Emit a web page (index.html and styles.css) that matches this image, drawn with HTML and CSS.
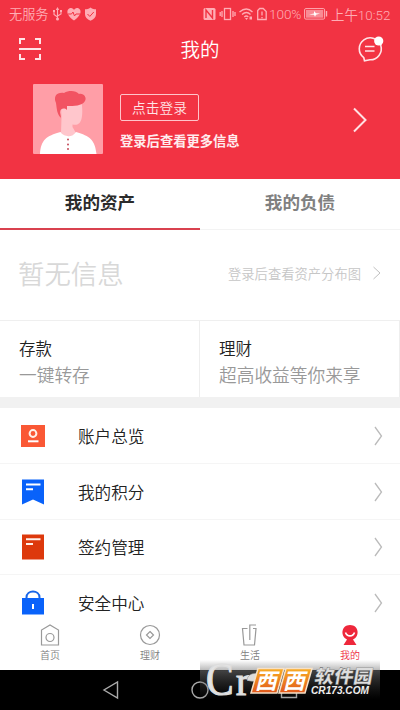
FILE: index.html
```html
<!DOCTYPE html>
<html lang="zh-CN">
<head>
<meta charset="utf-8">
<title>我的</title>
<link rel="stylesheet" href="styles.css">
</head>
<body>
<div class="phone">
  <header class="hero">
    <div class="status">
      <span class="carrier">无服务</span>
      <svg class="status-left" width="50" height="16" viewBox="0 0 50 16">
        <g fill="none" stroke="#ffadb5" stroke-width="1.1"><path d="M7.500 2v11M4 5v3.500l3.500 2.500M11 5v3l-3.500 2"/></g>
        <g fill="#ffadb5"><path d="M5.800 4l1.700-3 1.700 3zM3 4h2v2H3zM10 4h2v2h-2z"/><circle cx="7.500" cy="13" r="1.500"/>
        <path d="M24 14.500C14 7.500 17.500 2 21 2c1.500 0 2.500 1 3 2 .5-1 1.500-2 3-2 3.500 0 7 5.500-3 12.500z"/>
        <path d="M40.500 1.500c2 1.500 3.500 1.800 5.500 1.800v5c0 3-2 5-5.500 6.500C37 13.300 35 11.300 35 8.300v-5c2 0 3.500-.3 5.500-1.800z"/></g>
        <path d="M18 8h3.500l1.500-2 1.500 4 1.500-2h4M37.500 8l2.300 2.400 4-4.400" fill="none" stroke="#f23343"/>
      </svg>
      <svg class="status-right" width="66" height="16" viewBox="0 0 66 16">
        <rect x="2.500" y="2" width="12" height="12" rx="1.500" fill="#ffadb5"/>
        <path d="M5 12V4l6.500 8V4" fill="none" stroke="#f23343" stroke-width="1.400"/>
        <g fill="none" stroke="#ffadb5" stroke-width="1.300"><rect x="23.500" y="2.500" width="6" height="11"/><path d="M21 5v6M19.200 6v4M32 5v6M34 6v4"/>
        <path d="M38.500 6q7-6 13 0M41 8.500q4.500-4 8.500 0M43.300 11q2-2 4 0"/><path d="M56.700 4.500v9h8.500v-8l-3-3h-3.500zM61 5.500v4M61 11v1.300"/></g>
        <path d="M44 12l1.500 2 1.500-2zM48.500 10.500h2.500v3h-2.500z" fill="#ffadb5"/>
      </svg>
      <span class="percent">100%</span>
      <svg class="battery" width="24" height="12" viewBox="0 0 24 12"><rect x=".6" y=".6" width="20" height="10.500" rx="1.200" fill="none" stroke="#ffadb5"/><rect x="2" y="2" width="17.200" height="7.700" fill="#f98a94"/><path d="M22.500 3v5.500" stroke="#ffadb5" stroke-width="1.400"/><path d="M5 6.500l5-1V3l2 2.300 4 .2-4 1.200-1 2-1-2z" fill="#fff"/></svg>
      <span class="time">上午10:52</span>
    </div>
    <div class="appbar">
      <svg width="24" height="24" viewBox="0 0 24 24" fill="none" stroke="#ffe3e6" stroke-width="2"><path d="M2 7V2h5M17 2h5v5M22 17v5h-5M7 22H2v-5M1 12h22"/></svg>
      <h1>我的</h1>
      <svg width="28" height="28" viewBox="0 0 28 28"><path d="M7.800 22.700A11 11 0 1 1 14 24.800L8.500 25.800z" fill="none" stroke="#ffe3e6" stroke-width="1.600"/><path d="M9 11.500h9.500M9 16h9.500" stroke="#ffe3e6" stroke-width="1.600"/><circle cx="22.700" cy="6" r="4.600" fill="#fff"/></svg>
    </div>
    <div class="profile">
      <svg class="avatar" width="70" height="70" viewBox="0 0 70 70">
        <rect width="70" height="70" rx="1" fill="#ff9ea7"/>
        <path d="M28 22l7-4h13.500c1.500 9 1 18-2 21-2 2-4.500 2-7 1.500V43l3.500 6c-3 5-12 4-15 0l.5-15z" fill="#ffc6cc"/>
        <path d="M7 70c1-14 6-18 20.500-22 3 5 12 6 15.500 0 14 4 19 8 20.500 22z" fill="#fff"/>
        <path d="M28 34c-4-4-4-8-5-15-3-7 1-11 8-10 5-3 12-2.500 15 1 5-1 8 4 6 7-3 5-11 5-18 5v4c-3-3-7-1-7 2 0 2 1 3 1 7z" fill="#f25362"/>
        <g fill="#c54b5a"><circle cx="35" cy="55.500" r="1"/><circle cx="35" cy="60.500" r="1"/><circle cx="35" cy="65" r="1"/></g>
      </svg>
      <div class="login"><button>点击登录</button><p>登录后查看更多信息</p></div>
      <svg class="go" width="14" height="26" viewBox="0 0 14 26"><path d="M1 1.500L12.500 13 1 24.500" fill="none" stroke="#ffe0e3" stroke-width="2"/></svg>
    </div>
  </header>
  <nav class="tabs"><a class="active">我的资产</a><a>我的负债</a></nav>
  <section class="assets"><span class="empty">暂无信息</span><span class="hint">登录后查看资产分布图</span>
    <svg width="10" height="14" viewBox="0 0 10 14"><path d="M1.500 1L8 7l-6.500 6" fill="none" stroke="#c0c0c0"/></svg></section>
  <section class="products">
    <div><h2>存款</h2><p>一键转存</p></div>
    <div><h2>理财</h2><p>超高收益等你来享</p></div>
  </section>
  <ul class="menu">
    <li><svg class="icon" width="24" height="26" viewBox="0 0 24 26"><path d="M0 2h24v22H0z" fill="#fa5835"/><circle cx="12" cy="10.500" r="3.400" fill="none" stroke="#fff0e8" stroke-width="2"/><path d="M7 18.300h10.500" stroke="#fff" stroke-width="2"/></svg><span>账户总览</span><svg class="chev" width="9" height="20" viewBox="0 0 9 20"><path d="M1 1l6.500 9L1 19"/></svg></li>
    <li><svg class="icon" width="24" height="26" viewBox="0 0 24 26"><path d="M1 .5h22v25l-11-5-11 5z" fill="#0962fa"/><path d="M5 5.500h14.500M5 10.300h7" stroke="#fff" stroke-width="2"/></svg><span>我的积分</span><svg class="chev" width="9" height="20" viewBox="0 0 9 20"><path d="M1 1l6.500 9L1 19"/></svg></li>
    <li><svg class="icon" width="24" height="26" viewBox="0 0 24 26"><path d="M1 .5h22v25H1z" fill="#dd390c"/><path d="M5 5.200h14.500M5 10h7" stroke="#fff0e9" stroke-width="2"/></svg><span>签约管理</span><svg class="chev" width="9" height="20" viewBox="0 0 9 20"><path d="M1 1l6.500 9L1 19"/></svg></li>
    <li><svg class="icon" width="24" height="26" viewBox="0 0 24 26"><path d="M1 8h22v16.500H1z" fill="#0962fa"/><path d="M5.500 9V7.500C5.500-.5 18.500-.5 18.500 7.500V9" fill="none" stroke="#1765e8" stroke-width="2"/><path d="M12 14v5" stroke="#fff" stroke-width="2"/></svg><span>安全中心</span><svg class="chev" width="9" height="20" viewBox="0 0 9 20"><path d="M1 1l6.500 9L1 19"/></svg></li>
  </ul>
  <nav class="bottom">
    <a><svg width="22" height="24" viewBox="0 0 22 24"><path d="M2.500 22V7L11 2l8.500 5v15z"/><circle cx="11" cy="14.500" r="4"/></svg>首页</a>
    <a><svg width="22" height="24" viewBox="0 0 22 24"><circle cx="11" cy="12" r="9.500"/><path d="M11 8.500l3.500 3.500-3.500 3.500L7.500 12z"/></svg>理财</a>
    <a><svg width="22" height="24" viewBox="0 0 22 24"><path d="M8.500 5.500H3.500L5 22h10.500L17 5.500h-3M10.800 17V2H17"/></svg>生活</a>
    <a class="on"><svg width="22" height="24" viewBox="0 0 22 24"><path d="M8 16.500C1 13.500 2 2 11 2s10 11.500 3 14.500l3.500 5.500h-13z" fill="#ee273b" stroke="none"/><path d="M6.500 9.500c1.500 4.500 7.500 4.500 9 0" stroke="#fff" stroke-width="1.600"/></svg>我的</a>
  </nav>
  <footer class="system">
    <svg width="18" height="20" viewBox="0 0 18 20"><path d="M15.500 2v16L2 10z"/></svg>
    <svg width="18" height="20" viewBox="0 0 18 20"><circle cx="9" cy="10" r="8"/></svg>
    <svg width="18" height="20" viewBox="0 0 18 20"><path d="M1.500 2.500h15v15h-15z"/></svg>
  </footer>
  <div class="watermark">
    <svg width="190" height="60" viewBox="0 -10 190 60">
      <defs><linearGradient id="shade" x2="0" y2="1"><stop stop-color="#777" stop-opacity="0"/><stop offset=".22" stop-color="#777" stop-opacity=".55"/><stop offset=".8" stop-color="#444" stop-opacity="0"/></linearGradient><linearGradient id="orange" x2="0" y2="1"><stop stop-color="#f9ad24"/><stop offset="1" stop-color="#e0571c"/></linearGradient></defs>
      <rect width="180" height="50" fill="url(#shade)"/>
      <g class="mark-letters"><text x="0" y="0" font-size="45" transform="translate(6 35) scale(.92 1.03)">C</text><text x="36" y="34.500" font-size="40">r</text></g>
      <path d="M47 20c1-7 7-7 17-7-3 8-9 9-14 8z" fill="#ddd" stroke="#888" stroke-width=".5"/>
      <path d="M58 8.500h26l-7 24.500H51zM86 8.500h26l-7 24.500H79z" fill="url(#orange)" stroke="#f6e1c8" stroke-width="1.500"/>
      <g class="mark-square" transform="skewX(-14)"><text x="62" y="29">西</text><text x="90" y="29">西</text></g>
      <g class="mark-name" transform="skewX(-10)"><text x="118" y="23.500" textLength="58" lengthAdjust="spacingAndGlyphs">软件园</text></g>
      <text class="mark-url" x="111" y="33.500" textLength="58" lengthAdjust="spacingAndGlyphs">CR173.COM</text>
    </svg>
  </div>
</div>
</body>
</html>
```
FILE: styles.css
```css
* { box-sizing: border-box; }
body, h1, h2, p, ul { margin: 0; padding: 0; }
body { font-family: Roboto, "Noto Sans CJK SC", sans-serif; font-weight: 350; background: #fff; }
svg { display: block; flex: none; }
.phone { position: relative; width: 400px; height: 710px; overflow: hidden; display: flex; flex-direction: column; }
.hero { flex: none; height: 179px; background: #f23343; color: #fff; }
.status { height: 27px; display: flex; align-items: center; padding-left: 9px; color: #ffadb5; font-size: 13.2px; white-space: nowrap; }
.carrier { width: 41px; }
.status-right { margin-left: 101px; }
.percent { width: 33px; margin-left: 2px; font-size: 13.6px; letter-spacing: -.1px; }
.battery { margin-left: 2px; }
.time { margin-left: 3px; font-size: 13.4px; }
.appbar { height: 43px; display: flex; align-items: center; justify-content: space-between; padding: 0 16px 0 18px; }
.appbar h1 { font-size: 19.5px; font-weight: 350; padding-left: 2px; }
.profile { display: flex; align-items: flex-start; padding: 14px 33px 0; }
.login { margin-left: 17px; flex: 1; }
.login button { display: block; width: 79px; height: 27px; padding: 0; border: 1px solid #ffc4ca; border-radius: 2px; background: none; color: #ffe5e8; font: 350 13.7px/23px "Noto Sans CJK SC", sans-serif; margin-top: 10px; }
.login p { margin-top: 11px; font-size: 13.3px; line-height: 20px; font-weight: 700; color: #ffecee; }
.go { margin-top: 23px; }
.tabs { flex: none; height: 51px; display: flex; }
.tabs a { flex: 1; text-align: center; font-size: 17.6px; line-height: 48px; font-weight: 700; color: #808080; border-bottom: 1px solid #f3f3f3; }
.tabs .active { color: #2b2b2b; border-bottom: 2px solid #d9414f; }
.assets { flex: none; height: 90px; display: flex; align-items: center; padding: 0 18px 4px 18px; }
.empty { flex: 1; font-size: 26.4px; color: #d8d8d8; position: relative; top: -1px; }
.hint { font-size: 13.3px; color: #c6c6c6; margin-right: 11px; }
.products { flex: none; height: 77px; display: flex; border-top: 1px solid #efefef; }
.products div { flex: 1; padding: 16px 0 0 19px; border-right: 1px solid #eee; }
.products h2 { font-size: 16.5px; line-height: 25px; font-weight: 350; color: #222; }
.products p { font-size: 17.7px; line-height: 29px; color: #999; }
.menu { flex: none; height: 220px; overflow: hidden; list-style: none; border-top: 11px solid #f1f1f1; }
.menu li { height: 55.8px; display: flex; align-items: center; padding: 1px 17px 0 21px; border-bottom: 1px solid #f5f5f5; }
.menu span { flex: 1; margin-left: 33px; font-size: 16.6px; color: #222; }
.chev { fill: none; stroke: #bbb; stroke-width: 1.3; }
.bottom { flex: none; height: 53px; display: flex; background: #fff; }
.bottom a { flex: 1; display: flex; flex-direction: column; align-items: center; padding-top: 6px; font-size: 10px; line-height: 18px; color: #808080; }
.bottom svg { fill: none; stroke: #999; stroke-width: 1.2; }
.bottom .on { color: #ee273b; }
.system { flex: none; height: 40px; background: #000; display: flex; align-items: center; justify-content: center; gap: 71px; }
.system svg { fill: none; stroke: #aaa; stroke-width: 1.4; }
.watermark { position: absolute; left: 200px; top: 650px; }
.mark-letters { font-family: "Liberation Serif", serif; font-weight: 400; fill: #e4e4e4; stroke: #ddd; stroke-width: 1.2; }
.mark-square { font: 700 22px "Noto Sans CJK SC", sans-serif; fill: #fff; }
.mark-name { font: 900 18.500px "Noto Sans CJK SC", sans-serif; fill: #ddd; stroke: #555; stroke-width: .3; }
.mark-url { font: italic 700 10px "Liberation Sans", sans-serif; fill: #eee; }
```
